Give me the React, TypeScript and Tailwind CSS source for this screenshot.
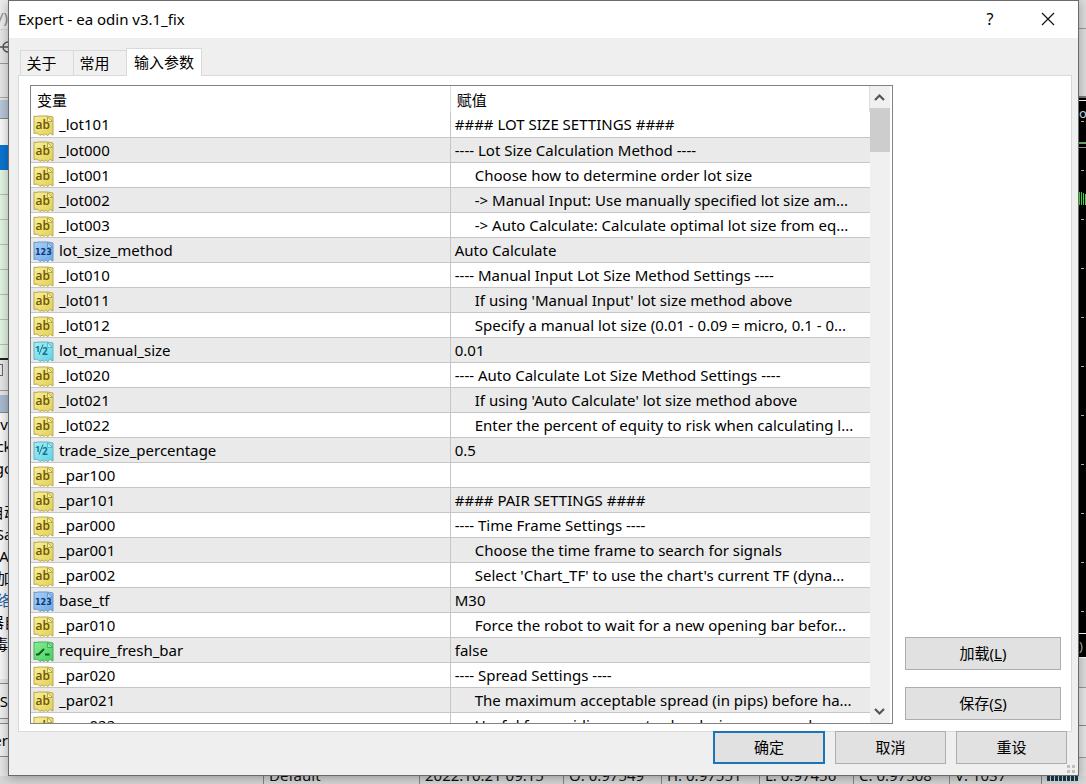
import React from "react";

type Kind = "text" | "int" | "real" | "bool";

interface Param {
  name: string;
  value: string;
  kind?: Kind;
  indent?: boolean;
}

const params: Param[] = [
  { name: "_lot101", value: "#### LOT SIZE SETTINGS ####" },
  { name: "_lot000", value: "---- Lot Size Calculation Method ----" },
  { name: "_lot001", value: "Choose how to determine order lot size", indent: true },
  { name: "_lot002", value: "-> Manual Input: Use manually specified lot size am...", indent: true },
  { name: "_lot003", value: "-> Auto Calculate: Calculate optimal lot size from eq...", indent: true },
  { name: "lot_size_method", value: "Auto Calculate", kind: "int" },
  { name: "_lot010", value: "---- Manual Input Lot Size Method Settings ----" },
  { name: "_lot011", value: "If using 'Manual Input' lot size method above", indent: true },
  { name: "_lot012", value: "Specify a manual lot size (0.01 - 0.09 = micro, 0.1 - 0...", indent: true },
  { name: "lot_manual_size", value: "0.01", kind: "real" },
  { name: "_lot020", value: "---- Auto Calculate Lot Size Method Settings ----" },
  { name: "_lot021", value: "If using 'Auto Calculate' lot size method above", indent: true },
  { name: "_lot022", value: "Enter the percent of equity to risk when calculating l...", indent: true },
  { name: "trade_size_percentage", value: "0.5", kind: "real" },
  { name: "_par100", value: "" },
  { name: "_par101", value: "#### PAIR SETTINGS ####" },
  { name: "_par000", value: "---- Time Frame Settings ----" },
  { name: "_par001", value: "Choose the time frame to search for signals", indent: true },
  { name: "_par002", value: "Select 'Chart_TF' to use the chart's current TF (dyna...", indent: true },
  { name: "base_tf", value: "M30", kind: "int" },
  { name: "_par010", value: "Force the robot to wait for a new opening bar befor...", indent: true },
  { name: "require_fresh_bar", value: "false", kind: "bool" },
  { name: "_par020", value: "---- Spread Settings ----" },
  { name: "_par021", value: "The maximum acceptable spread (in pips) before ha...", indent: true },
  { name: "_par022", value: "Useful for avoiding new trades during news and...", indent: true },
];

const palette: Record<Kind, { light: string; dark: string; edge: string; ink: string }> = {
  text: { light: "#f7ef9c", dark: "#e3d055", edge: "#b9a94e", ink: "#6b5600" },
  int: { light: "#a9d0f8", dark: "#6fa9e6", edge: "#6d97c6", ink: "#0b3a78" },
  real: { light: "#a5eef6", dark: "#62d3e4", edge: "#63b3c2", ink: "#14748c" },
  bool: { light: "#86ee92", dark: "#48cf62", edge: "#4eab5e", ink: "#0d5a20" },
};

function KindIcon({ kind }: { kind: Kind }) {
  const c = palette[kind];
  return (
    <svg viewBox="0 0 21 21" className="block h-[21px] w-[21px] shrink-0 self-end" aria-hidden="true">
      <defs>
        <linearGradient id={"fill-" + kind} x1="0" y1="0" x2="1" y2="1">
          <stop offset="0" stopColor={c.light} />
          <stop offset="1" stopColor={c.dark} />
        </linearGradient>
      </defs>
      <path
        d="M1 1l2 .6 2-.6h9.500l5.500 1v18l-1.500-.5-1-1.500-1.500 1.500-1.500 1-2-1.500-1.500 1.500-2-1.500-2 1.500-1.500-1.500-1.500-1-3 .5z"
        fill={"url(#fill-" + kind + ")"}
        stroke={c.edge}
      />
      <path d="M14.500 1.500v5h5z" fill={c.light} stroke={c.edge} />
      {kind === "text" && (
        <text x="2.5" y="14" fontSize="12" fontWeight="600" fontFamily="Open Sans, sans-serif" fill={c.ink}>ab</text>
      )}
      {kind === "int" && (
        <text x="2" y="14" fontSize="8" fontWeight="700" fontFamily="DejaVu Sans, sans-serif" fill={c.ink}>123</text>
      )}
      {kind === "real" && (
        <g fontFamily="Open Sans, sans-serif" fontWeight="700" fill={c.ink}>
          <text x="2" y="11" fontSize="9">1</text>
          <path d="M6 13.500L10 3.500" stroke={c.ink} />
          <text x="9" y="14" fontSize="10">2</text>
        </g>
      )}
      {kind === "bool" && (
        <path d="M3 13.500h2.500L11 8M12 13.500h4.500" fill="none" stroke={c.ink} strokeWidth="2" />
      )}
    </svg>
  );
}

function Chevron({ up }: { up?: boolean }) {
  return (
    <svg viewBox="0 0 20 20" className="h-5 w-5" fill="none" stroke="#555" strokeWidth="2.2" aria-hidden="true">
      <path d={up ? "M5 13L9.500 8.500l4.500 4.500" : "M5 7L9.500 11.500l4.500-4.500"} />
    </svg>
  );
}

function PushButton({ children, className = "" }: { children: React.ReactNode; className?: string }) {
  return (
    <button
      type="button"
      className={"h-[33px] border border-[#adadad] bg-[#e1e1e1] pb-[2px] text-center " + className}
    >
      {children}
    </button>
  );
}

function LeftEdge() {
  const log = ["v", "ck", "go", "", "自动", "Sa", "A", "加", "络", "器自", "毒_"];
  return (
    <div className="flex w-2 shrink-0 flex-col overflow-hidden bg-[#e6e6e6]" aria-hidden="true">
      <div className="flex h-[30px] items-end justify-end border-b border-[#d5d5d5] bg-[#ececec] leading-6 text-[#888]">/)</div>
      <div className="flex h-[34px] items-center border-b border-[#999]">
        <svg viewBox="0 0 8 16" className="h-4 w-2" fill="none" stroke="#555" strokeWidth="1.500">
          <path d="M0 8h8M8 3a5 5 0 0 0 0 10" />
        </svg>
      </div>
      <div className="h-[34px] border-b border-[#aaa]" />
      <div className="mt-[2px] h-[19px] border-b border-[#888] bg-[#b6c7d8]" />
      <div className="h-[26px] bg-[#f8f8f8]" />
      <div className="h-[25px] bg-[#0b74d0]" />
      {[0, 1, 2, 3, 4, 5, 6].map((i) => (
        <div key={i} className="h-[25px] shrink-0 border-b border-[#b3c2b3] bg-[#e2f4e2]" />
      ))}
      <div className="h-[15px] border-b-2 border-[#222] bg-[#e2f4e2]" />
      <div className="h-[31px] border-b border-[#999] pt-1">
        <div className="h-3 w-[3px] border-y border-r border-[#666]" />
      </div>
      <div className="mt-[4px] h-[18px] border-b border-[#888] bg-[#a8bbcf]" />
      <div className="flex h-[266px] flex-col bg-[#f6f6f6]">
        {log.map((t, i) => (
          <div
            key={i}
            className={
              "flex h-[22px] shrink-0 justify-center leading-[22px] whitespace-nowrap " +
              (t === "络" ? "text-[#1f5fa8]" : "text-black")
            }
          >
            {t}
          </div>
        ))}
      </div>
      <div className="mt-1 flex h-[36px] items-center justify-end border-y border-[#888] bg-[#efefef]">S</div>
      <div className="mt-1 flex h-[34px] items-center justify-end border-y border-[#888] bg-[#efefef]">er</div>
    </div>
  );
}

function RightEdge() {
  return (
    <div className="flex w-[7px] shrink-0 flex-col overflow-hidden bg-[#dcdcdc]" aria-hidden="true">
      <div className="h-[29px] border-b border-[#999]" />
      <div className="h-[69px] border-b-2 border-[#777]" />
      <div className="flex h-[560px] shrink-0 flex-col bg-black">
        <div className="mt-[2px] h-px shrink-0 bg-white" />
        <div className="h-5 shrink-0 text-[13px] leading-6 text-[#cfe0ee]">oc</div>
        <div className="ml-[2px] h-px w-[3px] shrink-0 bg-[#bbb]" />
        <div className="mt-5 h-[2px] shrink-0 bg-[#6cae6c]" />
        <div className="mt-[3px] h-px shrink-0 bg-[#999]" />
        <div className="mt-[22px] ml-[2px] h-px w-[3px] shrink-0 bg-[#bbb]" />
        <div className="mt-[21px] flex h-[13px] shrink-0 gap-px">
          <div className="w-px bg-[#4be04b]" />
          <div className="w-px bg-[#4be04b]" />
          <div className="mt-px w-px bg-[#4be04b]" />
          <div className="mt-[2px] w-px bg-[#4be04b]" />
        </div>
        <div className="min-h-0 flex-1 overflow-hidden">
          {[0, 1, 2, 3, 4, 5, 6, 7, 8].map((i) => (
            <div key={i} className="h-[49px] pt-[14px] pl-[2px]">
              <div className="h-px w-[3px] bg-[#bbb]" />
            </div>
          ))}
        </div>
        <div className="h-[25px] shrink-0 border-y border-white text-[13px] leading-6 text-[#b7b7a0]">)</div>
      </div>
      <div className="h-[30px] border-b border-[#999]" />
      <div className="h-[38px] border-b border-[#888] bg-[#e6e6e6]" />
      <div className="h-[32px] border-b border-[#999] bg-[#e6e6e6]" />
    </div>
  );
}

function StatusBar() {
  const cell = "flex shrink-0 items-end border-l border-[#858585] pl-[5px] whitespace-nowrap leading-[18px]";
  return (
    <div className="flex h-2 shrink-0 overflow-hidden bg-[#d6d6d6] text-[#111]">
      <div className="min-w-0 flex-1" />
      <div className={cell + " w-[156px]"}>Default</div>
      <div className={cell + " w-[144px]"}>2022.10.21 09:15</div>
      <div className={cell + " w-[98px]"}>O: 0.97549</div>
      <div className={cell + " w-[98px]"}>H: 0.97551</div>
      <div className={cell + " w-[94px]"}>L: 0.97456</div>
      <div className={cell + " w-[96px]"}>C: 0.97508</div>
      <div className={cell + " w-[92px]"}>V: 1037</div>
      <div className="flex w-[45px] shrink-0 items-start gap-px border-l border-[#858585] pl-[5px]">
        {[0, 1, 2, 3, 4, 5, 6, 7].map((i) => (
          <div key={i} className="h-[5px] w-[3px] bg-[#163c50]" />
        ))}
      </div>
    </div>
  );
}

export default function App() {
  return (
    <div className="flex h-screen flex-col overflow-hidden bg-[#d6d6d6] font-['Noto_Sans','Noto_Sans_CJK_SC',sans-serif] text-[15px] leading-5 text-black">
      <div className="flex min-h-0 flex-1">
        <LeftEdge />
        <section
          aria-labelledby="dialog-title"
          className="z-10 flex min-w-0 flex-1 flex-col border border-[#6b6b6b] bg-[#efefef] shadow-[0_2px_10px_rgba(0,0,0,0.3)]"
        >
          <header className="flex h-[37px] shrink-0 items-center bg-white pb-[2px] pl-[9px]">
            <h1 id="dialog-title" className="flex-1">Expert - ea odin v3.1_fix</h1>
            <button type="button" aria-label="Help" className="h-full w-14 text-base">?</button>
            <button type="button" aria-label="Close" className="flex h-full w-[60px] items-center justify-center">
              <svg viewBox="0 0 14 14" className="h-[14px] w-[14px]" stroke="#111" strokeWidth="1.200" aria-hidden="true">
                <path d="M1 1l12 12M13 1L1 13" />
              </svg>
            </button>
          </header>

          <div className="flex min-h-0 flex-1 flex-col pt-[10px] pr-[6px] pb-[11px] pl-[9px]">
            <nav role="tablist" className="z-10 -mb-px flex shrink-0 items-end pl-[2px]">
              <button type="button" role="tab" className="h-[26px] w-[53px] border border-r-0 border-[#d9d9d9] bg-[#f0f0f0] pr-[11px]">关于</button>
              <button type="button" role="tab" className="h-[26px] w-[53px] border border-r-0 border-[#d9d9d9] bg-[#f0f0f0] pr-[11px]">常用</button>
              <button type="button" role="tab" aria-selected="true" className="h-7 w-[76px] border border-b-0 border-[#d9d9d9] bg-white pb-[2px]">输入参数</button>
            </nav>

            <div className="flex min-h-0 flex-1 gap-3 border border-[#d9d9d9] bg-white pt-[9px] pr-[10px] pb-[7px] pl-[11px]">
              <div className="flex min-w-0 flex-1 border border-[#828282] pr-[2px]">
                <div className="min-w-0 flex-1 overflow-hidden">
                  <table className="w-full table-fixed border-collapse text-left">
                    <thead>
                      <tr className="h-[26px]">
                        <th scope="col" className="w-1/2 border-r border-[#dcdcdc] p-0 pt-px pl-[6px] font-normal">变量</th>
                        <th scope="col" className="border-r border-[#dcdcdc] p-0 pt-px pl-[6px] font-normal">赋值</th>
                      </tr>
                    </thead>
                    <tbody>
                      {params.map((p) => (
                        <tr key={p.name} className="h-[25px] border-b border-[#c6c6c6] even:bg-[#eaeaea]">
                          <td className="border-r border-[#c6c6c6] p-0">
                            <div className="flex h-6 items-center gap-[5px] pl-[2px]">
                              <KindIcon kind={p.kind ?? "text"} />
                              {p.name}
                            </div>
                          </td>
                          <td className={"overflow-hidden p-0 whitespace-nowrap " + (p.indent ? "pl-6" : "pl-1")}>{p.value}</td>
                        </tr>
                      ))}
                    </tbody>
                  </table>
                </div>
                <div className="flex w-5 shrink-0 flex-col bg-[#f0f0f0]">
                  <button type="button" aria-label="Scroll up" className="h-[22px]"><Chevron up /></button>
                  <div className="h-11 bg-[#cdcdcd]" />
                  <div className="flex-1" />
                  <button type="button" aria-label="Scroll down" className="h-[22px]"><Chevron /></button>
                </div>
              </div>
              <div className="flex w-[156px] shrink-0 flex-col justify-end gap-[17px] pb-1">
                <PushButton>加载(<u>L</u>)</PushButton>
                <PushButton>保存(<u>S</u>)</PushButton>
              </div>
            </div>

            <footer className="z-10 -mt-px flex shrink-0 justify-end gap-[10px] pr-[5px]">
              <button type="button" className="h-[33px] w-[112px] border-2 border-[#1a74b8] bg-[#e1e1e1] pb-[2px]">确定</button>
              <PushButton className="w-[111px]">取消</PushButton>
              <PushButton className="w-[111px]">重设</PushButton>
            </footer>
          </div>

          <svg viewBox="0 0 8 8" className="-mt-[10px] mr-[3px] mb-[2px] h-2 w-2 shrink-0 self-end" fill="#bfbfbf" aria-hidden="true">
            <path d="M0 0h3v3H0zM5 0h3v3H5zM0 5h3v3H0zM5 5h3v3H5z" />
          </svg>
        </section>
        <RightEdge />
      </div>
      <StatusBar />
    </div>
  );
}
